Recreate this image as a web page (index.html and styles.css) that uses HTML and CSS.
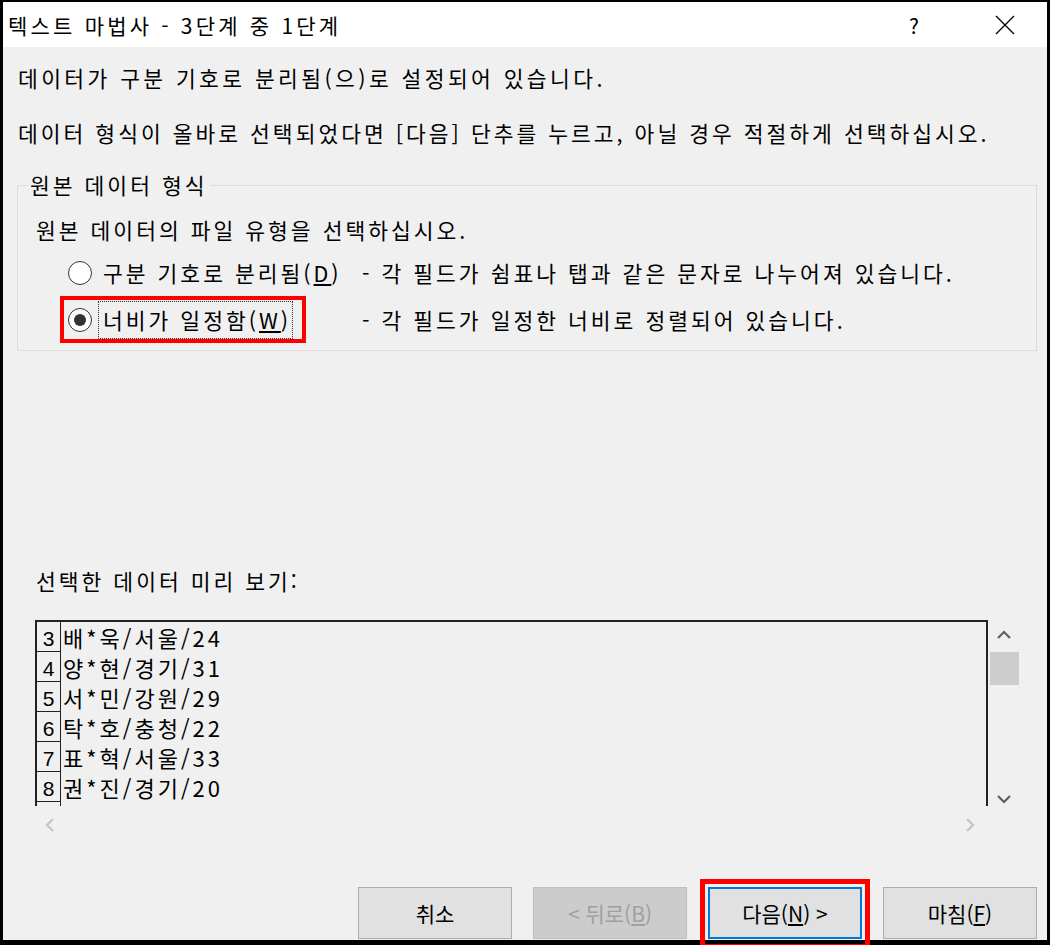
FILE: index.html
```html
<!DOCTYPE html>
<html lang="ko">
<head>
    <meta charset="UTF-8">
    <title>텍스트 마법사 - 3단계 중 1단계</title>
    <link rel="stylesheet" href="styles.css">
</head>
<body>
<div class="dialog">

    <div class="titlebar">
        <span class="title">텍스트 마법사 - 3단계 중 1단계</span>
        <span class="help">?</span>
        <svg class="close" width="20" height="20" viewBox="0 0 20 20">
            <path d="M1 1 L19 19 M19 1 L1 19" stroke="#000" stroke-width="1.3" fill="none"/>
        </svg>
    </div>

    <div class="content">
        <p class="line first">데이터가 구분 기호로 분리됨(으)로 설정되어 있습니다.</p>
        <p class="line second">데이터 형식이 올바로 선택되었다면 [다음] 단추를 누르고, 아닐 경우 적절하게 선택하십시오.</p>

        <fieldset class="group">
            <legend>원본 데이터 형식</legend>
            <p class="line group-text">원본 데이터의 파일 유형을 선택하십시오.</p>
            <div class="options">
                <span class="option">
                    <span class="radio"></span>
                    <span class="label">구분 기호로 분리됨(<u>D</u>)</span>
                </span>
                <span class="desc">- 각 필드가 쉼표나 탭과 같은 문자로 나누어져 있습니다.</span>

                <span class="option marked">
                    <span class="radio checked"></span>
                    <span class="label focus">너비가 일정함(<u>W</u>)</span>
                </span>
                <span class="desc">- 각 필드가 일정한 너비로 정렬되어 있습니다.</span>
            </div>
        </fieldset>

        <p class="line preview-title">선택한 데이터 미리 보기:</p>

        <div class="preview">
            <div class="preview-text">
                <div class="row"><span class="num">3</span><span class="data">배*욱/서울/24</span></div>
                <div class="row"><span class="num">4</span><span class="data">양*현/경기/31</span></div>
                <div class="row"><span class="num">5</span><span class="data">서*민/강원/29</span></div>
                <div class="row"><span class="num">6</span><span class="data">탁*호/충청/22</span></div>
                <div class="row"><span class="num">7</span><span class="data">표*혁/서울/33</span></div>
                <div class="row"><span class="num">8</span><span class="data">권*진/경기/20</span></div>
                <div class="row"><span class="num"></span><span class="data"></span></div>
            </div>
            <div class="vscroll">
                <svg width="16" height="10" viewBox="0 0 16 10"><path d="M2 8 L8 2 L14 8" stroke="#606060" stroke-width="2.2" fill="none"/></svg>
                <div class="thumb"></div>
                <div class="spacer"></div>
                <svg width="16" height="10" viewBox="0 0 16 10"><path d="M2 2 L8 8 L14 2" stroke="#606060" stroke-width="2.2" fill="none"/></svg>
            </div>
            <div class="hscroll">
                <svg width="10" height="16" viewBox="0 0 10 16"><path d="M8 2 L2 8 L8 14" stroke="#c4c4c4" stroke-width="2.2" fill="none"/></svg>
                <svg width="10" height="16" viewBox="0 0 10 16"><path d="M2 2 L8 8 L2 14" stroke="#c4c4c4" stroke-width="2.2" fill="none"/></svg>
            </div>
        </div>

        <div class="buttons">
            <button>취소</button>
            <button disabled>&lt; 뒤로(<u>B</u>)</button>
            <span class="marked-btn">
                <button class="default">다음(<u>N</u>) &gt;</button>
            </span>
            <button>마침(<u>F</u>)</button>
        </div>
    </div>

</div>
</body>
</html>
```

FILE: styles.css
```css
* {
    box-sizing: border-box;
}
body {
    margin: 0;
    background: #000;
    font-family: "Noto Sans CJK KR", "Noto Sans", sans-serif;
    color: #000;
}
.dialog {
    width: 1050px;
    height: 945px;
    border-style: solid;
    border-color: #000;
    border-width: 2px 3px 5px 3px;
    background: #f0f0f0;
    display: flex;
    flex-direction: column;
}
.titlebar {
    height: 45px;
    background: #fff;
    display: flex;
    align-items: center;
    padding-left: 5px;
}
.title {
    font-size: 21px;
    letter-spacing: 3.2px;
    flex: 1;
}
.help {
    font-size: 21px;
    margin-right: 76px;
}
.close {
    margin-right: 32px;
}
.content {
    flex: 1;
    padding: 0 10px 0 14px;
    display: flex;
    flex-direction: column;
}
.line {
    margin: 0;
    font-size: 21.5px;
    line-height: 28px;
    letter-spacing: 3px;
    white-space: nowrap;
}
.first {
    margin-top: 17px;
    padding-left: 1px;
    letter-spacing: 3.4px;
}
.second {
    margin-top: 27px;
    padding-left: 1px;
}
.group {
    margin: 24px 0 0 0;
    border: 1px solid #dcdcdc;
    padding: 0 0 7px 10px;
    min-width: 0;
}
.group legend {
    font-size: 21.5px;
    line-height: 28px;
    letter-spacing: 3px;
    padding: 0 2px;
}
.group-text {
    margin-top: 17px;
    padding-left: 8px;
}
.options {
    margin-top: 5px;
    padding-left: 32px;
    display: grid;
    grid-template-columns: 302px auto;
    align-items: center;
}
.option {
    justify-self: start;
    display: inline-flex;
    align-items: center;
    height: 47px;
    border: 4px solid transparent;
    padding: 0 9px 0 4px;
}
.option.marked {
    border-color: #f00;
}
.radio {
    width: 24px;
    height: 24px;
    border-radius: 50%;
    border: 1.5px solid #333;
    background: #fff;
    display: flex;
    align-items: center;
    justify-content: center;
    margin-right: 6px;
}
.radio.checked::after {
    content: "";
    width: 12px;
    height: 12px;
    border-radius: 50%;
    background: #333;
}
.label {
    font-size: 21.5px;
    line-height: 28px;
    letter-spacing: 3px;
    white-space: nowrap;
    padding: 4px 1px 4px 4px;
    border: 1px dotted transparent;
}
.label.focus {
    border-color: #333;
}
.desc {
    font-size: 21.5px;
    letter-spacing: 3px;
    white-space: nowrap;
}
.preview-title {
    margin-top: 216px;
    padding-left: 19px;
}
.preview {
    margin: 25px 0 0 18px;
    width: 985px;
    display: grid;
    grid-template-columns: 953px 32px;
    grid-template-rows: 186px 38px;
}
.preview-text {
    border: 2px solid #222;
    border-bottom: none;
    overflow: hidden;
}
.row {
    display: flex;
    height: 30px;
}
.num {
    flex: none;
    width: 24px;
    height: 31px;
    margin-top: -1px;
    border: 1px solid #222;
    border-left: none;
    font-family: "Liberation Sans", sans-serif;
    font-size: 21px;
    line-height: 34px;
    text-align: center;
    overflow: hidden;
}
.data {
    font-family: "Noto Sans CJK KR", monospace;
    font-size: 22px;
    line-height: 30px;
    letter-spacing: 3px;
    padding-left: 2px;
    white-space: pre;
    overflow: hidden;
}
.vscroll {
    display: flex;
    flex-direction: column;
    align-items: center;
    padding-top: 10px;
}
.thumb {
    width: 29px;
    height: 33px;
    background: #cdcdcd;
    margin-top: 12px;
}
.spacer {
    flex: 1;
}
.vscroll svg:last-child {
    margin-bottom: 2px;
}
.hscroll {
    grid-column: 1 / 3;
    display: flex;
    justify-content: space-between;
    align-items: center;
    padding: 0 45px 0 10px;
}
.buttons {
    margin-top: 43px;
    display: flex;
    justify-content: flex-end;
    gap: 21px;
}
button {
    width: 154px;
    height: 52px;
    background: #e1e1e1;
    border: 1px solid #adadad;
    font-family: "Noto Sans CJK KR", sans-serif;
    font-size: 21px;
    color: #000;
    padding: 0;
}
button:disabled {
    background: #cccccc;
    border-color: #bfbfbf;
    color: #a0a0a0;
}
button.default {
    border: 2px solid #0078d7;
}
.marked-btn {
    position: relative;
    display: flex;
}
.marked-btn::before {
    content: "";
    position: absolute;
    left: -8px;
    right: -8px;
    top: -8px;
    bottom: -10px;
    border: 5px solid #f00;
    z-index: 2;
}
```
